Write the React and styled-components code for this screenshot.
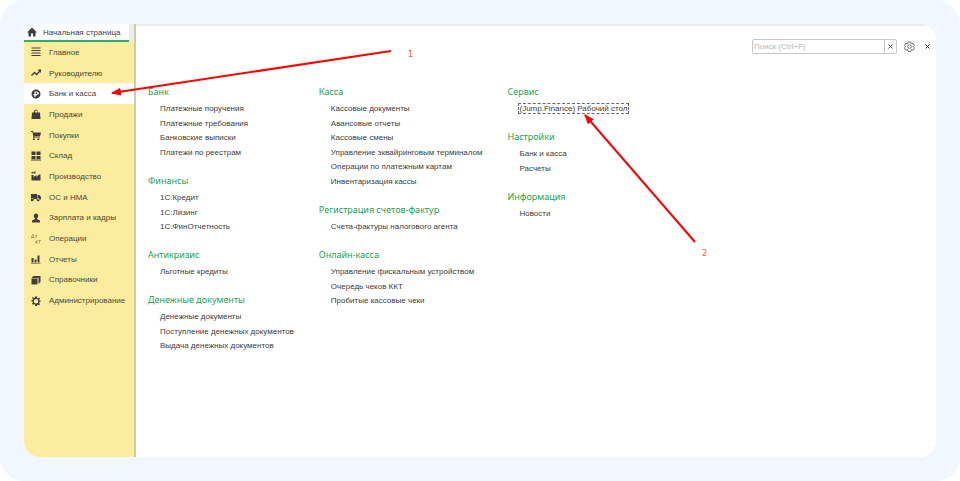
import React from 'react';
import styled, { createGlobalStyle } from 'styled-components';

const GlobalStyle = createGlobalStyle`
    * {
        box-sizing: border-box;
    }
    body {
        margin: 0;
        background: #fff;
        font-family: 'Liberation Sans', Arial, sans-serif;
        font-size: 8px;
        color: #3c3c3c;
    }
`

const Backdrop = styled.div`
    min-height: 100vh;
    padding: 24px;
    display: flex;
    border-radius: 24px;
    background: #f1f6ff;
`

const Window = styled.div`
    position: relative;
    flex: 1;
    display: flex;
    overflow: hidden;
    border-radius: 16px;
    background: #fff;
`

const Sidebar = styled.aside`
    flex: none;
    width: 112px;
    display: flex;
    flex-direction: column;
    background: #fcec9e;
    border-right: 2px solid #d3cba2;
`

const TabStrip = styled.div`
    background: #ececec;
`

const HomeTab = styled.a`
    height: 18px;
    margin-right: 5px;
    padding-left: 3px;
    display: flex;
    align-items: center;
    gap: 6px;
    background: #fff;
    border-bottom: 2px solid #2fae6b;
    color: inherit;
    text-decoration: none;
    white-space: nowrap;
`

const Menu = styled.nav`
    height: 269px;
    display: flex;
    flex-direction: column;
`

const MenuItem = styled.a`
    flex: 1;
    padding-left: 7px;
    display: flex;
    align-items: center;
    gap: 8px;
    background: ${({ $active }) => ($active ? '#fff' : 'transparent')};
    color: #4d4636;
    text-decoration: none;
    white-space: nowrap;
`

const Icon = styled.svg`
    flex: none;
    width: 10px;
    height: 10px;
    fill: #3d3d42;
`

const Content = styled.main`
    flex: 1;
    min-width: 0;
    padding: 12px 3px 12px 12px;
    border-top: 2px solid #ececec;
`

const Toolbar = styled.div`
    height: 16px;
    display: flex;
    justify-content: flex-end;
    align-items: center;
    gap: 6px;
`

const SearchBox = styled.form`
    width: 145px;
    height: 15px;
    display: flex;
    border: 1px solid #c8c8c8;
    border-radius: 2px;
`

const SearchInput = styled.input`
    flex: 1;
    min-width: 0;
    padding: 0 1px;
    border: 0;
    outline: 0;
    background: none;
    font: inherit;
    &::placeholder {
        color: #bdb8b6;
        opacity: 1;
    }
`

const IconButton = styled.button`
    width: 12px;
    padding: 0;
    display: flex;
    align-items: center;
    justify-content: center;
    border: 0;
    background: none;
`

const ClearButton = styled(IconButton)`
    border-left: 1px solid #c8c8c8;
`

const CrossIcon = styled.svg`
    width: 5px;
    height: 5px;
    stroke: #444;
    stroke-width: 2;
`

const GearIcon = styled.svg`
    width: 11px;
    height: 11px;
    fill: none;
    stroke: #666;
    stroke-width: 2;
`

const Columns = styled.div`
    margin-top: 30px;
    display: flex;
    gap: 25px;
`

const Column = styled.div`
    display: flex;
    flex-direction: column;
    gap: 13px;
`

const GroupTitle = styled.h2`
    margin: 0 0 2px;
    font-family: 'Noto Sans', sans-serif;
    font-size: 9px;
    font-weight: 400;
    line-height: 16px;
    color: #16a34f;
    white-space: nowrap;
`

const LinkList = styled.ul`
    margin: 0;
    padding: 0 0 0 12px;
    list-style: none;
`

const LinkRow = styled.li`
    line-height: 14px;
    white-space: nowrap;
    &:nth-child(even) {
        line-height: 15px;
    }
`

const SectionLink = styled.a`
    color: inherit;
    text-decoration: none;
    outline: ${({ $focused }) => ($focused ? '1px dashed #666' : 'none')};
`

const Arrows = styled.svg`
    position: absolute;
    top: 0;
    left: 0;
    width: 700px;
    height: 240px;
    pointer-events: none;
`

const StepNumber = styled.span`
    position: absolute;
    left: ${({ $x }) => $x}px;
    top: ${({ $y }) => $y}px;
    font-family: 'DejaVu Sans', sans-serif;
    line-height: 12px;
    color: #ff4d4d;
`

const HOME_ICON = <path d='M10 1L0 11h3v8h5v-6h4v6h5v-8h3z' />

const MENU = [
    {
        text: 'Главное',
        icon: <path d='M1 1h18v2H1zM1 6h18v2H1zM1 11h18v2H1zM1 16h18v2H1z' />
    },
    {
        text: 'Руководителю',
        icon: <path d='M0 14L7 7l4 4 5-5-3-3h7v7l-2-2-7 7-4-4-5 5z' />
    },
    {
        text: 'Банк и касса',
        active: true,
        icon: <path fillRule='evenodd' d='M10 1a9 9 0 100 18 9 9 0 000-18zM7 5h4a4 3 0 010 7H9v1h3v1H9v2H7v-2H5v-1h2v-1H5v-2h2zM9 7v3h2a1 1 0 000-3z' />
    },
    {
        text: 'Продажи',
        icon: <path fillRule='evenodd' d='M2 7h4V5c0-5 8-5 8 0v2h4l1 13H1zM8 7h5V5c0-3-5-3-5 0z' />
    },
    {
        text: 'Покупки',
        icon: <path d='M0 2h4l1 3h15l-2 8H7v2h11v1H5L3 4H0zM7 17a2 2 0 100 3 2 2 0 000-3zM16 17a2 2 0 100 3 2 2 0 000-3z' />
    },
    {
        text: 'Склад',
        icon: <path d='M1 1h8v7H1zM11 1h8v7h-8zM1 10h8v6H1zM11 10h8v6h-8zM0 17h20v2H0z' />
    },
    {
        text: 'Производство',
        icon: <path d='M1 2h3v3H1zM5 1h4v4H5zM1 19V8h4v4l6-4v4l5-5h3v12z' />
    },
    {
        text: 'ОС и НМА',
        icon: <path d='M0 4h12v10H0zM13 6h4l3 4v5h-7zM4 13a3 3 0 100 5 3 3 0 000-5zM16 13a3 3 0 100 5 3 3 0 000-5z' />
    },
    {
        text: 'Зарплата и кадры',
        icon: <path d='M10 1c-6 0-5 8-2 10v1l-6 3v4h16v-4l-6-3v-1c3-2 4-10-2-10z' />
    },
    {
        text: 'Операции',
        icon: (
            <path
                fill='none'
                stroke='#66604d'
                strokeWidth='1'
                d='M0 9V7h6v2M1 7l2-6h2v6M8 3h4M10 3v5M10 13v6M14 13l-4 3 4 3M15 13h5M17 13v6'
            />
        )
    },
    {
        text: 'Отчеты',
        icon: <path d='M1 8h4v9H1zM7 11h4v6H7zM13 3h4v14h-4zM0 18h19v1H0z' />
    },
    {
        text: 'Справочники',
        icon: <path d='M1 6l4-4h14l-4 4zM1 7h11v12H1zM13 7l2-1v11l-2 2zM16 5l3-3v12l-3 3z' />
    },
    {
        text: 'Администрирование',
        icon: <path fillRule='evenodd' d='M8 1h4v3l2 1 2-2 2 2-2 3 1 1h2v3h-2l-1 2 2 2-2 3-3-2-1 1v2H8v-3l-2-1-2 2-2-3 2-2-1-2H1V8h2l1-2-2-2 2-2 2 2 2-1zM10 6a4 4 0 100 9 4 4 0 000-9z' />
    }
]

const COLUMNS = [
    [
        { title: 'Банк', links: ['Платежные поручения', 'Платежные требования', 'Банковские выписки', 'Платежи по реестрам'] },
        { title: 'Финансы', links: ['1С:Кредит', '1С:Лизинг', '1С:ФинОтчетность'] },
        { title: 'Антикризис', links: ['Льготные кредиты'] },
        { title: 'Денежные документы', links: ['Денежные документы', 'Поступление денежных документов', 'Выдача денежных документов'] }
    ],
    [
        {
            title: 'Касса',
            links: [
                'Кассовые документы',
                'Авансовые отчеты',
                'Кассовые смены',
                'Управление эквайринговым терминалом',
                'Операции по платежным картам',
                'Инвентаризация кассы'
            ]
        },
        { title: 'Регистрация счетов-фактур', links: ['Счета-фактуры налогового агента'] },
        { title: 'Онлайн-касса', links: ['Управление фискальным устройством', 'Очередь чеков ККТ', 'Пробитые кассовые чеки'] }
    ],
    [
        { title: 'Сервис', links: ['(Jump.Finance) Рабочий стол'] },
        { title: 'Настройки', links: ['Банк и касса', 'Расчеты'] },
        { title: 'Информация', links: ['Новости'] }
    ]
]

const FOCUSED_LINK = '(Jump.Finance) Рабочий стол'

const Cross = () => (
    <CrossIcon viewBox='0 0 10 10'>
        <path d='M1 1l8 8M9 1l-8 8' />
    </CrossIcon>
)

const Group = ({ title, links }) => (
    <section>
        <GroupTitle>{title}</GroupTitle>
        <LinkList>
            {links.map(link => (
                <LinkRow key={link}>
                    <SectionLink href='#' $focused={link === FOCUSED_LINK}>{link}</SectionLink>
                </LinkRow>
            ))}
        </LinkList>
    </section>
)

export default function App() {
    return (
        <Backdrop>
            <GlobalStyle />
            <Window>
                <Sidebar>
                    <TabStrip>
                        <HomeTab href='#'>
                            <Icon viewBox='0 0 20 20'>{HOME_ICON}</Icon>
                            Начальная страница
                        </HomeTab>
                    </TabStrip>
                    <Menu>
                        {MENU.map(({ text, icon, active }) => (
                            <MenuItem key={text} href='#' $active={active}>
                                <Icon viewBox='0 0 20 20'>{icon}</Icon>
                                {text}
                            </MenuItem>
                        ))}
                    </Menu>
                </Sidebar>
                <Content>
                    <Toolbar>
                        <SearchBox>
                            <SearchInput type='text' placeholder='Поиск (Ctrl+F)' aria-label='Поиск' />
                            <ClearButton type='button' aria-label='Очистить'>
                                <Cross />
                            </ClearButton>
                        </SearchBox>
                        <IconButton type='button' aria-label='Настройка'>
                            <GearIcon viewBox='0 0 24 24'>
                                <path d='M9 2h6l1 4 4-1 3 5-3 2 3 3-3 5-4-1-1 4H9l-1-4-4 1-3-5 3-3-3-2 3-5 4 1z' />
                                <circle cx='12' cy='12' r='4' />
                            </GearIcon>
                        </IconButton>
                        <IconButton type='button' aria-label='Закрыть'>
                            <Cross />
                        </IconButton>
                    </Toolbar>
                    <Columns>
                        {COLUMNS.map(groups => (
                            <Column key={groups[0].title}>
                                {groups.map(group => <Group key={group.title} {...group} />)}
                            </Column>
                        ))}
                    </Columns>
                </Content>
                <Arrows viewBox='0 0 700 240'>
                    <defs>
                        <marker id='head' markerUnits='userSpaceOnUse' markerWidth='10' markerHeight='8' refX='1' refY='4' orient='auto'>
                            <path d='M0 4L10 0v8z' fill='#f00' />
                        </marker>
                    </defs>
                    <path d='M88 69L367 27' stroke='#f00' strokeWidth='2' markerStart='url(#head)' />
                    <path d='M561 91L671 218' stroke='#f00' strokeWidth='2' markerStart='url(#head)' />
                </Arrows>
                <StepNumber $x={384} $y={25}>1</StepNumber>
                <StepNumber $x={678} $y={224}>2</StepNumber>
            </Window>
        </Backdrop>
    )
}
